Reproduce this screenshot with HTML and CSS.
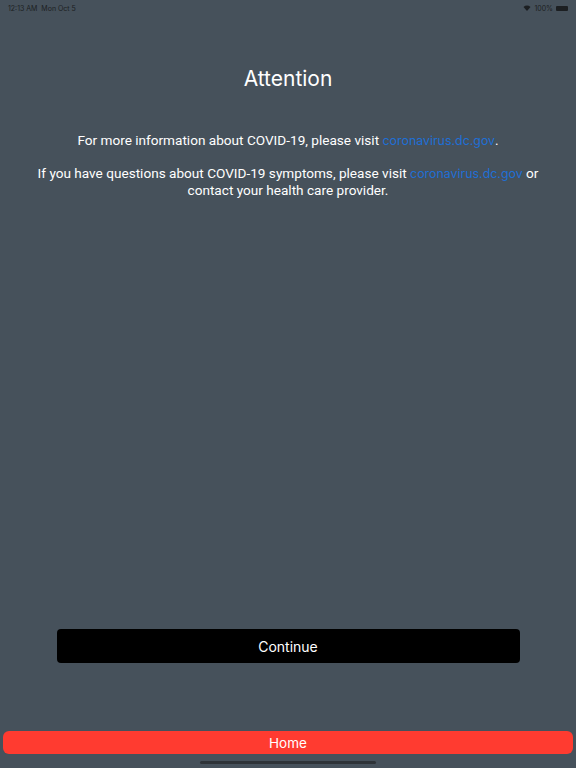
FILE: index.html
```html
<!DOCTYPE html>
<html lang="en">
<head>
    <meta charset="UTF-8">
    <meta name="viewport" content="width=device-width, initial-scale=1.0">
    <title>Attention</title>
    <link rel="stylesheet" href="styles.css">
</head>
<body>
    <div class="screen">
        <div class="status-bar">
            <span class="time">12:13 AM&nbsp;&nbsp;Mon Oct 5</span>
            <span class="status-right">
                <svg class="wifi" width="8" height="6" viewBox="0 0 8 6">
                    <path d="M4 6 L0.5 2 A5 5 0 0 1 7.5 2 Z" fill="#1c1f22"/>
                </svg>
                <span>100%</span>
                <span class="battery"></span>
            </span>
        </div>

        <div class="content">
            <h1>Attention</h1>
            <p>For more information about COVID-19, please visit <a href="#">coronavirus.dc.gov</a>.</p>
            <p>If you have questions about COVID-19 symptoms, please visit <a href="#">coronavirus.dc.gov</a> or<br>contact your health care provider.</p>
        </div>

        <button class="continue-btn">Continue</button>

        <button class="home-btn">Home</button>
        <div class="home-indicator"></div>
    </div>
</body>
</html>
```

FILE: styles.css
```css
* {
    margin: 0;
    padding: 0;
    box-sizing: border-box;
    font-family: 'Inter', 'Liberation Sans', sans-serif;
}
body {
    width: 576px;
    height: 768px;
    background: #46515b;
    overflow: hidden;
}
.screen {
    display: flex;
    flex-direction: column;
    align-items: center;
    height: 768px;
}
.status-bar {
    width: 100%;
    height: 14px;
    padding: 2px 8px 0 8px;
    display: flex;
    justify-content: space-between;
    align-items: center;
    font-size: 7px;
    color: #1c1f22;
}
.status-right {
    display: flex;
    align-items: center;
    gap: 3px;
}
.battery {
    width: 12px;
    height: 5px;
    border-radius: 1px;
    background: #1c1f22;
    display: inline-block;
}
.content {
    flex: 1;
    width: 100%;
    text-align: center;
    color: #ffffff;
}
h1 {
    font-size: 21px;
    font-weight: 400;
    margin-top: 52px;
    margin-bottom: 41px;
}
p {
    font-family: 'Roboto', 'Liberation Sans', sans-serif;
    font-size: 13.6px;
    line-height: 17px;
    margin-bottom: 16px;
}
a {
    color: #1e6fd6;
    text-decoration: none;
    font-size: 12.4px;
}
.continue-btn {
    width: 463px;
    height: 34px;
    background: #000000;
    color: #ffffff;
    border: none;
    border-radius: 4px;
    font-size: 14px;
    margin-bottom: 68px;
}
.home-btn {
    width: 570px;
    height: 23px;
    background: #ff3b30;
    color: #ffffff;
    border: none;
    border-radius: 6px;
    font-size: 13.5px;
}
.home-indicator {
    width: 176px;
    height: 3px;
    border-radius: 2px;
    background: #2e3338;
    margin-top: 7px;
    margin-bottom: 4px;
}
```
